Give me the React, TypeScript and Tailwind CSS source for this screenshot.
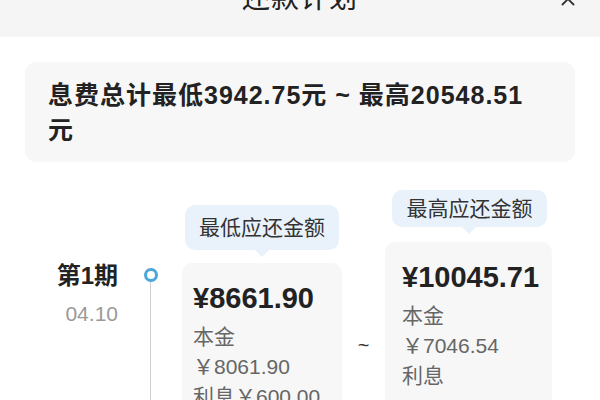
import { X } from "lucide-react";

const font = { fontFamily: '"Liberation Sans", "Noto Sans CJK SC", sans-serif' };

interface PlanColumnProps {
  tip: string;
  amount: string;
  principal: string;
  interest: string;
  variant: "low" | "high";
}

function PlanColumn({ tip, amount, principal, interest, variant }: PlanColumnProps) {
  const low = variant === "low";
  return (
    <div className={low ? "flex w-[160px] flex-col pt-[15px]" : "flex w-[167px] flex-col"}>
      {/* 提示气泡 */}
      <div
        className={
          low
            ? "mx-[3px] flex h-[45px] items-center justify-center rounded-[10px] bg-[#e9f2fb] text-[21px] text-[#333]"
            : "ml-[7px] mr-[5px] flex h-[45px] items-center justify-center rounded-[10px] bg-[#e9f2fb] text-[21px] text-[#333]"
        }
      >
        {tip}
      </div>
      <div className="flex justify-center">
        <div className="h-0 w-0 border-x-[7px] border-t-[7px] border-x-transparent border-t-[#e9f2fb]" />
      </div>

      {/* 金额卡片 */}
      <div
        className={
          low
            ? "mt-[6px] h-[300px] rounded-[10px] bg-[#f7f7f7] pl-[11px] pt-[17px]"
            : "mt-[8px] h-[300px] rounded-[10px] bg-[#f7f7f7] pl-[17px] pt-[17px]"
        }
      >
        <div className="text-[29px] font-bold leading-[36px] text-[#222]">{amount}</div>
        <div className="mt-[6px] text-[21px] leading-[30px] text-[#666]">本金</div>
        <div className="text-[21px] leading-[30px] text-[#666]">{principal}</div>
        <div className="whitespace-nowrap text-[21px] leading-[30px] text-[#666]">{interest}</div>
      </div>
    </div>
  );
}

export default function App() {
  return (
    <div className="h-[400px] w-[600px] overflow-hidden bg-white" style={font}>
      {/* 顶部标题栏 */}
      <div className="relative flex h-[37px] justify-center overflow-hidden bg-[#f5f5f5]">
        <div className="-mt-[19px] text-[28px] leading-[36px] tracking-[1px] text-[#222]">还款计划</div>
        <X className="absolute right-[21px] -top-[12px] h-[22px] w-[22px] text-[#333]" strokeWidth={2} />
      </div>

      {/* 息费总计 */}
      <div className="mx-[25px] mt-[25px] h-[100px] rounded-[12px] bg-[#f7f7f7] pl-[23px] pr-[40px] pt-[16px]">
        <div className="text-[25px] font-bold leading-[35px] tracking-[1px] text-[#222]">
          息费总计最低3942.75元 ~ 最高20548.51元
        </div>
      </div>

      {/* 第1期 */}
      <div className="mt-[28px] flex h-[300px]">
        <div className="w-[118px] pt-[71px] text-right">
          <div className="text-[24px] font-bold leading-[30px] text-[#222]">第1期</div>
          <div className="mt-[9px] text-[21px] leading-[28px] text-[#999]">04.10</div>
        </div>

        <div className="ml-[25px] flex w-[15px] flex-col items-center pt-[78px]">
          <div className="h-[14px] w-[14px] rounded-full border-[3px] border-[#4aa6dc] bg-white" />
          <div className="w-px flex-1 bg-[#cfcfcf]" />
        </div>

        <div className="ml-[24px]">
          <PlanColumn
            variant="low"
            tip="最低应还金额"
            amount="¥8661.90"
            principal="￥8061.90"
            interest="利息￥600.00"
          />
        </div>

        <div className="w-[43px] pt-[140px] text-center text-[20px] leading-[30px] text-[#333]">~</div>

        <PlanColumn
          variant="high"
          tip="最高应还金额"
          amount="¥10045.71"
          principal="￥7046.54"
          interest="利息"
        />
      </div>
    </div>
  );
}
